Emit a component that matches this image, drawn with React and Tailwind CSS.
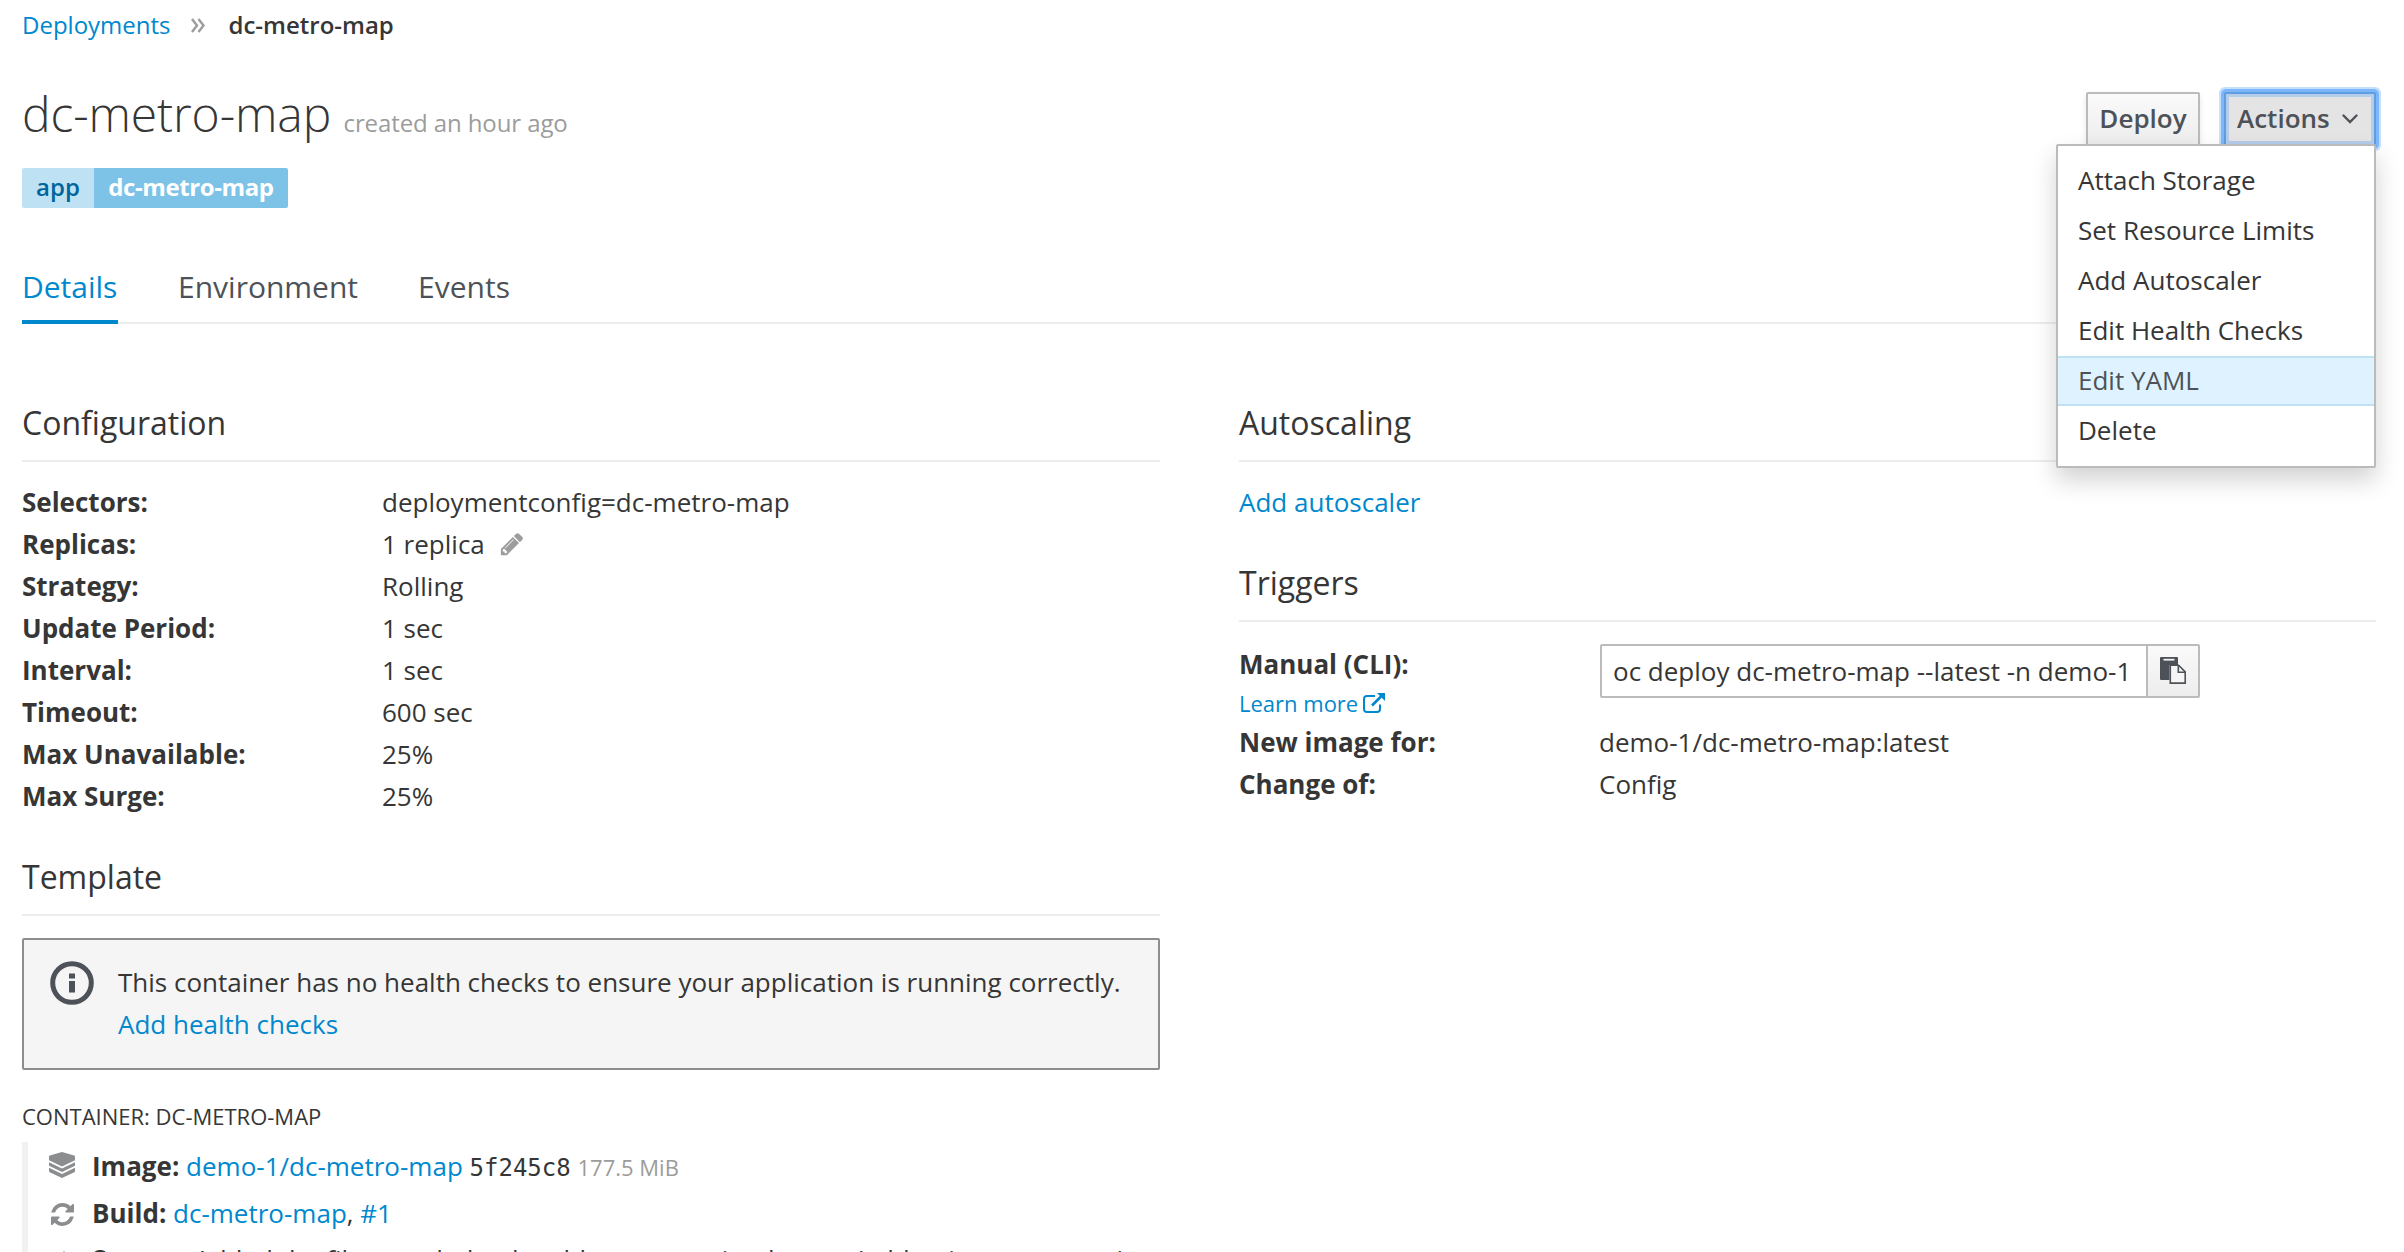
const config = [
  ["Selectors:", "deploymentconfig=dc-metro-map"],
  ["Replicas:", "1 replica"],
  ["Strategy:", "Rolling"],
  ["Update Period:", "1 sec"],
  ["Interval:", "1 sec"],
  ["Timeout:", "600 sec"],
  ["Max Unavailable:", "25%"],
  ["Max Surge:", "25%"],
];

const menu = ["Attach Storage", "Set Resource Limits", "Add Autoscaler", "Edit Health Checks", "Edit YAML", "Delete"];

function PencilIcon() {
  return (
    <svg className="ml-[14px] h-[26px] w-[26px] fill-[#9c9c9c]" viewBox="0 0 1792 1792">
      <path d="M491 1536l91-91-235-235-91 91v107h128v128h107zm523-928q0-22-22-22-10 0-17 7l-542 542q-7 7-7 17 0 22 22 22 10 0 17-7l542-542q7-7 7-17zm-54-192l416 416-832 832h-416v-416zm683 96q0 53-37 90l-166 166-416-416 166-165q36-38 90-38 53 0 91 38l235 234q37 39 37 91z" />
    </svg>
  );
}

function RefreshIcon() {
  return (
    <svg className="h-[23px] w-[23px] fill-[#8b8d8f]" viewBox="128 128 1536 1536">
      <path d="M1639 1056q0 5-1 7-64 268-268 434.5t-478 166.5q-146 0-282.5-55t-243.5-157l-129 129q-19 19-45 19t-45-19-19-45v-448q0-26 19-45t45-19h448q26 0 45 19t19 45-19 45l-137 137q71 66 161 102t187 36q134 0 250-65t186-179q11-17 53-117 8-23 30-23h192q13 0 22.5 9.5t9.5 22.5zm25-800v448q0 26-19 45t-45 19h-448q-26 0-45-19t-19-45 19-45l138-138q-148-137-349-137-134 0-250 65t-186 179q-11 17-53 117-8 23-30 23h-199q-13 0-22.5-9.5t-9.5-22.5v-7q65-268 270-434.5t480-166.5q146 0 284 55.5t245 156.5l130-129q19-19 45-19t45 19 19 45z" />
    </svg>
  );
}

function LayersIcon() {
  return (
    <svg className="h-[26px] w-[26px]" viewBox="0 0 26 26" fill="#8b8d8f">
      <path d="M13 0l12.200 3.400q.8.300.8 1.100V8.200L13 14.400 0 8.200V4.500q0-.8.8-1.100z" />
      <path d="M0 10.300l13 6.200 13-6.200v3.400l-13 6.300-13-6.300z" />
      <path d="M0 15.700L13 22l13-6.300v3.400q0 .8-.7 1.200L13 26 .7 20.300q-.7-.4-.7-1.200z" />
    </svg>
  );
}

function InfoIcon() {
  return (
    <svg className="h-[44px] w-[44px] shrink-0" viewBox="0 0 44 44">
      <circle cx="22" cy="22" r="19.300" fill="none" stroke="#4d5258" strokeWidth="5" />
      <path fill="#4d5258" d="M19 12.500h6v5h-6zM19 20h6v11.500h-6z" />
    </svg>
  );
}

function ExternalIcon() {
  return (
    <svg className="ml-[5px] h-[20px] w-[22px]" viewBox="0 0 22 20" fill="none" stroke="#0088ce" strokeWidth="2">
      <path d="M12 3H4a3 3 0 0 0-3 3v10a3 3 0 0 0 3 3h10a3 3 0 0 0 3-3v-4.500" />
      <path strokeWidth="2.600" d="M9 12.500L18.500 3" />
      <path fill="#0088ce" stroke="none" d="M14 0h8v8z" />
    </svg>
  );
}

function PasteIcon() {
  return (
    <svg className="h-[27px] w-[26px]" viewBox="0 0 26 27">
      <path fill="#4d5258" d="M1 0h16a1 1 0 0 1 1 1v7h-8.500v15H1a1 1 0 0 1-1-1V1a1 1 0 0 1 1-1z" />
      <path fill="#f5f5f5" d="M3.500 1.800h11v1.800h-11z" />
      <path fill="#f5f5f5" stroke="#4d5258" strokeWidth="1.600" d="M10.300 8.300h8.300l6.600 6.600v11.200H10.300z" />
      <path fill="none" stroke="#4d5258" strokeWidth="1.600" d="M18.300 8.300v6.900h7" />
    </svg>
  );
}

function Heading({ children }) {
  return <h2 className="border-b-2 border-[#ededed] pt-[2px] pb-[17px] text-[32px] leading-[40px]">{children}</h2>;
}

export default function App() {
  return (
    <div className="h-[1252px] w-[2404px] overflow-hidden bg-white pr-7 pl-[22px] font-['Open_Sans',sans-serif] text-[26px] leading-[42px] text-[#363636]">
      <nav className="flex items-center pt-[5px] text-[24px] leading-[40px]">
        <a className="text-[#0088ce]">Deployments</a>
        <svg className="mr-[24px] ml-[20px] h-[15px] w-[14px]" viewBox="0 0 14 15" fill="none" stroke="#9c9c9c" strokeWidth="2.400">
          <path d="M1 1l5 6.500-5 6.500M7.500 1l5 6.500-5 6.500" />
        </svg>
        <span className="font-semibold">dc-metro-map</span>
      </nav>

      <header className="mt-[42px] flex h-[52px] items-start justify-between">
        <h1 className="mt-px text-[48px] leading-[52px] font-light tracking-[-0.1px]">
          dc-metro-map <small className="text-[24px] font-normal text-[#9c9c9c]">created an hour ago</small>
        </h1>
        <div className="mt-[5px] flex gap-6 font-semibold text-[#4d5258]">
          <button className="flex h-[54px] w-[114px] justify-center rounded-[2px] border-2 border-[#bbb] bg-linear-to-b from-[#fafafa] to-[#ededed] pt-[3px] shadow-[0_4px_6px_rgba(3,3,3,0.1)]">Deploy</button>
          <div className="relative">
            <button className="flex h-[54px] w-[152px] items-start rounded-[2px] border-2 border-[#5f9de0] bg-[#e4e4e4] pt-[3px] pl-[11px] shadow-[inset_0_0_0_3px_#b4cdeb,0_0_0_3px_#7db7fb,0_0_0_5px_#c5dffd]">
              Actions
              <svg className="mt-[17px] ml-[12px] h-[10px] w-[16px]" viewBox="0 0 16 10" fill="none" stroke="#4d5258" strokeWidth="2.400" strokeLinecap="round">
                <path d="M1.500 1.500L8 8l6.500-6.500" />
              </svg>
            </button>
            <ul className="absolute top-[52px] right-0 z-10 w-[320px] rounded-[2px] border-2 border-[#bbb] bg-white py-[10px] font-normal text-[#363636] shadow-[0_12px_24px_rgba(3,3,3,0.18)]">
              {menu.map((item) => (
                <li
                  key={item}
                  className={
                    item === "Edit YAML"
                      ? "h-[50px] border-y-2 border-[#bee1f4] bg-[#def3ff] pl-5 leading-[44px] text-[#4d5258]"
                      : "h-[50px] border-y-2 border-transparent pl-5 leading-[44px]"
                  }
                >
                  {item}
                </li>
              ))}
            </ul>
          </div>
        </div>
      </header>

      <div className="mt-[29px] flex h-10 text-[24px] leading-[37px] font-semibold">
        <span className="w-[72px] rounded-l-[2px] bg-[#bee1f4] text-center text-[#00659c]">app</span>
        <span className="w-[194px] rounded-r-[2px] bg-[#7dc3e8] text-center font-bold tracking-[-0.4px] text-white">dc-metro-map</span>
      </div>

      <div className="mt-[56px] flex h-[60px] gap-[60px] border-b-2 border-[#ededed] text-[30px] leading-[46px] text-[#4d5258]">
        <span className="h-[60px] w-[96px] border-b-4 border-[#0088ce] text-[#0088ce]">Details</span>
        <span>Environment</span>
        <span>Events</span>
      </div>

      <main className="mt-[77px] flex gap-[79px]">
        <section className="w-[1138px]">
          <Heading>Configuration</Heading>
          <dl className="mt-[19px]">
            {config.map(([k, v]) => (
              <div key={k} className="flex">
                <dt className="w-[360px] font-bold">{k}</dt>
                <dd className="flex items-center">
                  {v}
                  {k === "Replicas:" && <PencilIcon />}
                </dd>
              </div>
            ))}
          </dl>
          <div className="mt-[38px]">
            <Heading>Template</Heading>
          </div>
          <div className="mt-[22px] flex h-[132px] gap-6 rounded-[2px] border-2 border-[#8b8d8f] bg-[#f5f5f5] pt-[21px] pl-[26px]">
            <InfoIcon />
            <div>
              <p>This container has no health checks to ensure your application is running correctly.</p>
              <a className="text-[#0088ce]">Add health checks</a>
            </div>
          </div>
          <h3 className="mt-[31px] text-[22px] leading-[30px]">CONTAINER: DC-METRO-MAP</h3>
          <div className="mt-[11px] h-[110px] border-l-6 border-[#f1f1f1] leading-[46px] whitespace-nowrap">
            <div className="flex">
              <span className="flex w-[64px] items-start justify-center pt-[10px] pl-[4px]"><LayersIcon /></span>
              <p className="mt-px -mb-px">
                <b>Image:</b> <a className="text-[#0088ce]">demo-1/dc-metro-map</a>{" "}
                <span className="font-['DejaVu_Sans_Mono',monospace] text-[24px]">5f245c8</span>{" "}
                <small className="text-[22px] text-[#9c9c9c]">177.5 MiB</small>
              </p>
            </div>
            <div className="flex">
              <span className="flex w-[64px] items-start justify-center pt-[13px] pl-[4px]"><RefreshIcon /></span>
              <p><b>Build:</b> <a className="text-[#0088ce]">dc-metro-map</a>, <a className="text-[#0088ce]">#1</a></p>
            </div>
            <div className="flex">
              <span className="flex w-[64px] justify-center pt-[15px] pl-[8px]">
                <svg className="h-[22px] w-[22px] fill-[#8b8d8f]" viewBox="0 0 22 22"><path d="M11 0l11 11-11 11L0 11z" /></svg>
              </span>
              <p>
                <b>Source:</b> Added the files needed to be able to run <span className="ml-[5px]">using</span>{" "}
                <span className="ml-[3px]">bower</span> <span className="ml-[4px]">(add unit test to</span>{" "}
                <span className="ml-[3px]">running</span>
              </p>
            </div>
          </div>
        </section>

        <section className="w-[1137px]">
          <Heading>Autoscaling</Heading>
          <p className="mt-[19px] text-[#0088ce]">Add autoscaler</p>
          <div className="mt-[38px]">
            <Heading>Triggers</Heading>
          </div>
          <dl className="mt-[21px]">
            <div className="flex">
              <dt className="w-[361px] font-bold">
                Manual (CLI):
                <a className="flex items-center text-[22px] leading-[36px] font-normal text-[#0088ce]">Learn more<ExternalIcon /></a>
              </dt>
              <dd className="mt-px flex h-[54px] w-[600px] rounded-[2px] border-2 border-[#bbb]">
                <span className="grow pl-[11px] leading-[50px]">oc deploy dc-metro-map --latest -n demo-1</span>
                <span className="flex w-[52px] items-start justify-center border-l-2 border-[#bbb] bg-linear-to-b from-[#fafafa] to-[#ededed] pt-[11px]"><PasteIcon /></span>
              </dd>
            </div>
            <div className="flex">
              <dt className="w-[360px] font-bold">New image for:</dt>
              <dd>demo-1/dc-metro-map:latest</dd>
            </div>
            <div className="flex">
              <dt className="w-[360px] font-bold">Change of:</dt>
              <dd>Config</dd>
            </div>
          </dl>
        </section>
      </main>
    </div>
  );
}
